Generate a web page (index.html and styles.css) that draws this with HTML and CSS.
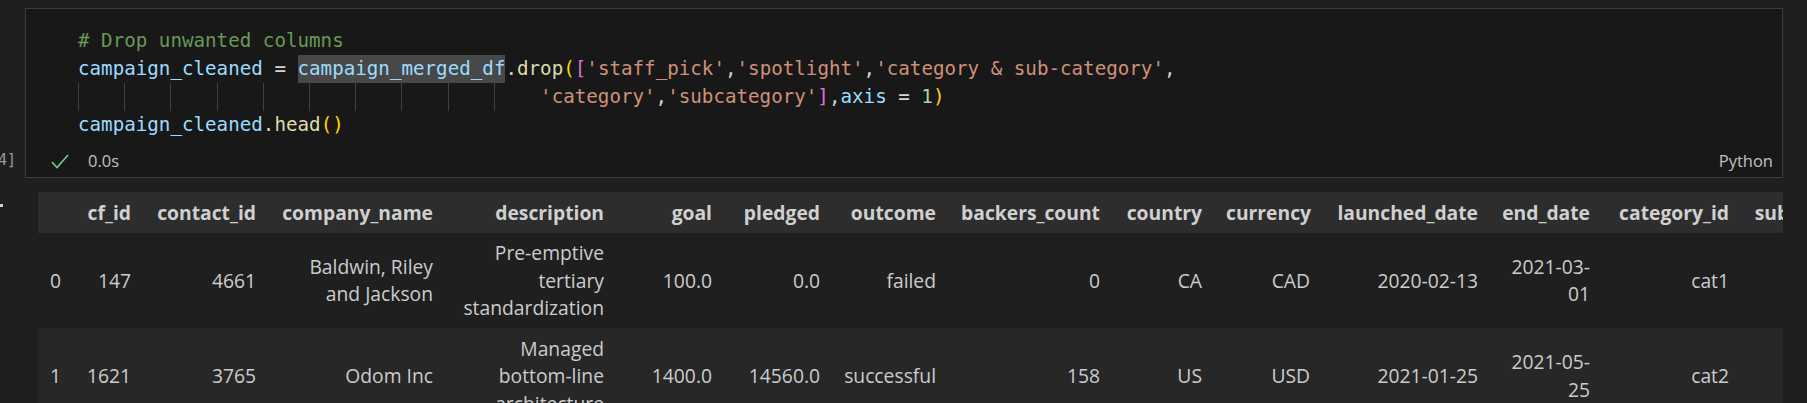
FILE: index.html
```html
<!DOCTYPE html>
<html>
<head>
<meta charset="utf-8">
<link rel="stylesheet" href="styles.css">
</head>
<body>
<div class="cell-row">
  <div class="gutter"><span class="exec-count">[4]</span></div>
  <div class="cell">
    <div class="code">
      <div class="line"><span class="cm"># Drop unwanted columns</span></div>
      <div class="line"><span class="vr">campaign_cleaned</span><span class="op"> = </span><span class="vr hl">campaign_merged_df</span><span class="op">.</span><span class="fn">drop</span><span class="b1">(</span><span class="b2">[</span><span class="st">'staff_pick'</span><span class="op">,</span><span class="st">'spotlight'</span><span class="op">,</span><span class="st">'category &amp; sub-category'</span><span class="op">,</span></div>
      <div class="line"><span class="indent">                                        </span><span class="st">'category'</span><span class="op">,</span><span class="st">'subcategory'</span><span class="b2">]</span><span class="op">,</span><span class="vr">axis</span><span class="op"> = </span><span class="nm">1</span><span class="b1">)</span></div>
      <div class="line"><span class="vr">campaign_cleaned</span><span class="op">.</span><span class="fn">head</span><span class="b1">()</span></div>
    </div>
    <div class="status">
      <svg class="check" width="18" height="15" viewBox="0 0 18 15"><polyline points="1,8 6,13.5 17,1" fill="none" stroke="#73c991" stroke-width="1.6"/></svg>
      <span class="time">0.0s</span>
      <span class="lang">Python</span>
    </div>
  </div>
</div>
<div class="output-row">
  <div class="out-gutter"><span class="dot"></span></div>
  <div class="table-wrap">
    <table class="df">
      <colgroup>
        <col class="w-idx"><col class="w-cf"><col class="w-contact"><col class="w-company"><col class="w-desc"><col class="w-goal"><col class="w-pledged"><col class="w-outcome"><col class="w-backers"><col class="w-country"><col class="w-currency"><col class="w-launched"><col class="w-end"><col class="w-cat"><col class="w-subcat">
      </colgroup>
      <thead>
        <tr><th></th><th>cf_id</th><th>contact_id</th><th>company_name</th><th>description</th><th>goal</th><th>pledged</th><th>outcome</th><th>backers_count</th><th>country</th><th>currency</th><th>launched_date</th><th>end_date</th><th>category_id</th><th>subcategory_id</th></tr>
      </thead>
      <tbody>
        <tr><td class="idx">0</td><td>147</td><td>4661</td><td>Baldwin, Riley and Jackson</td><td>Pre-emptive tertiary standardization</td><td>100.0</td><td>0.0</td><td>failed</td><td>0</td><td>CA</td><td>CAD</td><td>2020-02-13</td><td>2021-03-01</td><td>cat1</td><td>subcat1</td></tr>
        <tr class="alt"><td class="idx">1</td><td>1621</td><td>3765</td><td>Odom Inc</td><td>Managed bottom-line architecture</td><td>1400.0</td><td>14560.0</td><td>successful</td><td>158</td><td>US</td><td>USD</td><td>2021-01-25</td><td>2021-05-25</td><td>cat2</td><td>subcat2</td></tr>
      </tbody>
    </table>
  </div>
</div>
</body>
</html>
```

FILE: styles.css
```css
html, body {
  margin: 0;
  padding: 0;
  background: #1f1f1f;
  overflow: hidden;
}
body {
  width: 1807px;
  height: 403px;
  font-family: "Open Sans", "Noto Sans", sans-serif;
  color: #cccccc;
}
.cell-row {
  display: flex;
  padding-top: 8px;
}
.gutter {
  width: 25px;
  flex: none;
  display: flex;
  align-items: flex-end;
  justify-content: flex-end;
  padding-bottom: 7px;
  box-sizing: border-box;
  overflow: visible;
}
.exec-count {
  font-family: "DejaVu Sans Mono", monospace;
  font-size: 15px;
  line-height: 22px;
  color: #9a9a9a;
  white-space: nowrap;
  margin-right: 9px;
}
.cell {
  width: 1758px;
  flex: none;
  box-sizing: border-box;
  border: 1px solid #3c3c40;
  background: #181818;
  padding: 18px 0 5px 0;
}
.code {
  padding-left: 52px;
  font-family: "DejaVu Sans Mono", monospace;
  font-size: 19.2px;
  line-height: 28px;
  color: #d4d4d4;
}
.line {
  height: 28px;
  white-space: pre;
}
.cm { color: #6a9955; }
.vr { color: #9cdcfe; }
.op { color: #d4d4d4; }
.fn { color: #dcdcaa; }
.b1 { color: #ffd700; }
.b2 { color: #da70d6; }
.st { color: #ce9178; }
.nm { color: #b5cea8; }
.hl {
  display: inline-block;
  background: #484848;
  height: 28px;
  vertical-align: top;
}
.indent {
  display: inline-block;
  height: 28px;
  vertical-align: top;
  background-image: repeating-linear-gradient(90deg, #404040 0, #404040 1px, transparent 1px, transparent 4ch);
}
.status {
  display: flex;
  align-items: center;
  height: 22px;
  margin-top: 11px;
  padding-left: 25px;
  padding-right: 9px;
  font-size: 16.5px;
  line-height: 22px;
  color: #c0c0c0;
}
.check {
  display: block;
  margin-right: 19px;
}
.time {
  flex: 1;
}
.output-row {
  display: flex;
  margin-top: 14px;
}
.out-gutter {
  width: 38px;
  flex: none;
}
.dot {
  display: block;
  width: 3px;
  height: 3px;
  background: #d0d0d0;
  margin-top: 12px;
}
.table-wrap {
  width: 1745px;
  flex: none;
  overflow: hidden;
}
.df {
  table-layout: fixed;
  border-collapse: collapse;
  border-spacing: 0;
  width: 1873px;
  font-size: 19.3px;
  line-height: 27.5px;
}
.w-idx { width: 36px; }
.w-cf { width: 69px; }
.w-contact { width: 125px; }
.w-company { width: 177px; }
.w-desc { width: 171px; }
.w-goal { width: 108px; }
.w-pledged { width: 108px; }
.w-outcome { width: 116px; }
.w-backers { width: 164px; }
.w-country { width: 102px; }
.w-currency { width: 108px; }
.w-launched { width: 168px; }
.w-end { width: 112px; }
.w-cat { width: 139px; }
.w-subcat { width: 170px; }
.df th, .df td {
  padding: 6.5px 12px;
  text-align: right;
  vertical-align: middle;
}
.df thead tr {
  background: #2d2d2d;
}
.df th {
  font-weight: 700;
  color: #d0d0d0;
  white-space: nowrap;
}
.df td {
  color: #cccccc;
}
.df td.idx {
  text-align: left;
}
.df tr.alt {
  background: #272727;
}
```
